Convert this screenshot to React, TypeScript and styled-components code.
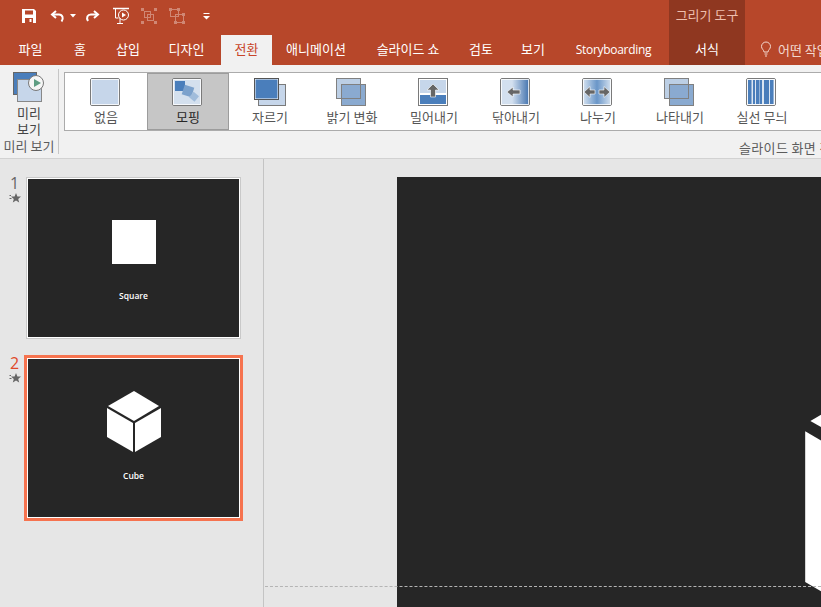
import styled, { createGlobalStyle } from "styled-components";

const GlobalStyle = createGlobalStyle`
    html, body {
        margin: 0;
        padding: 0;
        overflow: hidden;
        background-color: #e6e6e6;
    }
    * {
        box-sizing: border-box;
    }
    body {
        font-family: "Noto Sans CJK KR", "Noto Sans", sans-serif;
        font-size: 13px;
    }
`;

const Page = styled.div`
    width: 821px;
    height: 607px;
    overflow: hidden;
    display: flex;
    flex-direction: column;
`;

const TitleRow = styled.div`
    display: flex;
    justify-content: space-between;
    height: 35px;
    padding-right: 76px;
    background-color: #b7472a;
`;

const QuickAccess = styled.div`
    display: flex;
    align-items: center;
    padding: 0 0 3px 20px;
`;

const QuickButton = styled.div<{ $w: number; $gap: number; $dim?: boolean }>`
    width: ${(p) => p.$w}px;
    height: 20px;
    margin-left: ${(p) => p.$gap}px;
    display: flex;
    align-items: center;
    justify-content: center;
    opacity: ${(p) => (p.$dim ? 0.35 : 1)};
`;

const ContextLabel = styled.div`
    width: 76px;
    background-color: #8f3720;
    color: #eebfae;
    text-align: center;
    line-height: 30px;
    white-space: nowrap;
`;

const TabRow = styled.div`
    display: flex;
    height: 30px;
    padding-left: 5px;
    background-color: #b7472a;
`;

const Tab = styled.div<{ $w: number; $active?: boolean; $context?: boolean }>`
    width: ${(p) => p.$w}px;
    flex-shrink: 0;
    text-align: center;
    line-height: 28px;
    white-space: nowrap;
    color: ${(p) => (p.$active ? "#c8452a" : "#fff")};
    background-color: ${(p) => (p.$active ? "#f1f1f1" : p.$context ? "#8f3720" : "transparent")};
`;

const LatinText = styled.span`
    font-family: "Open Sans", sans-serif;
    font-size: 12px;
    letter-spacing: -0.3px;
    margin-left: -2px;
`;

const TellMe = styled.div`
    display: flex;
    align-items: center;
    gap: 6px;
    padding: 0 0 2px 15px;
    color: #f3d9d0;
    white-space: nowrap;
`;

const Ribbon = styled.div`
    display: flex;
    height: 94px;
    flex-shrink: 0;
    overflow: hidden;
    background-color: #f1f1f1;
    border-bottom: 1px solid #d2d2d2;
`;

const PreviewGroup = styled.div`
    width: 59px;
    height: 85px;
    margin-top: 4px;
    border-right: 1px solid #c6c6c6;
    display: flex;
    flex-direction: column;
    align-items: center;
    color: #444;
`;

const PreviewButton = styled.div`
    display: flex;
    flex-direction: column;
    align-items: center;
    height: 71px;
    padding-top: 3px;
    line-height: 16px;
    text-align: center;
`;

const PreviewText = styled.div`
    margin-top: 2px;
`;

const GroupLabel = styled.div`
    color: #5c5c5c;
    line-height: 16px;
    white-space: nowrap;
`;

const TransitionLabel = styled(GroupLabel)`
    margin-left: 675px;
    letter-spacing: 0.35px;
`;

const TransitionGroup = styled.div`
    padding: 7px 0 0 5px;
    width: 762px;
    flex-shrink: 0;
`;

const Gallery = styled.div`
    display: flex;
    width: 800px;
    height: 59px;
    margin-bottom: 9px;
    background-color: #fff;
    border: 1px solid #ababab;
`;

const GalleryItem = styled.div<{ $selected?: boolean }>`
    width: 82px;
    flex-shrink: 0;
    display: flex;
    flex-direction: column;
    align-items: center;
    padding-top: 5px;
    color: ${(p) => (p.$selected ? "#262626" : "#555")};
    background-color: ${(p) => (p.$selected ? "#c6c6c6" : "transparent")};
    outline: ${(p) => (p.$selected ? "1px solid #9c9c9c" : "none")};
    outline-offset: -1px;
`;

const GalleryText = styled.div`
    line-height: 16px;
    margin-top: 2px;
    white-space: nowrap;
`;

const Workspace = styled.div`
    position: relative;
    flex: 1;
    display: flex;
    overflow: hidden;
    background-color: #e6e6e6;
`;

const ThumbPane = styled.div`
    width: 264px;
    flex-shrink: 0;
    padding: 19px 0 0 10px;
    display: flex;
    flex-direction: column;
    gap: 20px;
    border-right: 1px solid #c4c4c4;
`;

const ThumbRow = styled.div`
    display: flex;
`;

const ThumbMeta = styled.div<{ $selected?: boolean }>`
    width: 17px;
    margin-left: -4px;
    margin-right: 4px;
    display: flex;
    flex-direction: column;
    align-items: center;
    font-family: "Open Sans", sans-serif;
    font-size: 16px;
    line-height: 10px;
    color: ${(p) => (p.$selected ? "#e0492a" : "#666")};
`;

const StarMark = styled.svg`
    margin-top: 5px;
    display: block;
`;

const Thumb = styled.div<{ $selected?: boolean }>`
    position: relative;
    width: 213px;
    height: 160px;
    display: flex;
    flex-direction: column;
    align-items: center;
    background-color: #262626;
    border: 1px solid #fff;
    outline: ${(p) => (p.$selected ? "3px solid #f6734f" : "1px solid #c9c9c9")};
`;

const ThumbShapeSlot = styled.div`
    height: 80px;
    margin-top: 32px;
    display: flex;
    justify-content: center;
`;

const WhiteSquare = styled.div`
    width: 44px;
    height: 44px;
    margin-top: 9px;
    background-color: #fff;
`;

const ThumbCaption = styled.div`
    font-family: "Open Sans", sans-serif;
    font-size: 8.5px;
    font-weight: 600;
    line-height: 10px;
    color: #fff;
`;

const Canvas = styled.div`
    flex: 1;
    padding: 18px 0 0 133px;
`;

const MainSlide = styled.div`
    position: relative;
    height: 440px;
    overflow: hidden;
    background-color: #262626;
`;

const MainCube = styled.div`
    position: absolute;
    left: 408px;
    top: 166px;
    width: 281px;
    height: 317px;
`;

const GuideLine = styled.div`
    position: absolute;
    left: 265px;
    right: 0;
    top: 427px;
    border-top: 1px dashed #b4b4b4;
`;

function Cube({ size }: { size?: number }) {
    return (
        <svg viewBox="0 0 54 61" width={size ?? "100%"} height={size ? (size * 61) / 54 : "100%"} fill="#fff" display="block">
            <polygon points="27,0 52,15 27,30 1,15" />
            <polygon points="0,17 26,32 26,61 0,46" />
            <polygon points="28,32 54,17 54,46 28,61" />
        </svg>
    );
}

function Star() {
    return (
        <StarMark width="12" height="10" viewBox="0 0 12 10" fill="#666">
            <polygon points="7,0 8.400,3.400 12,3.600 9.200,5.900 10.200,9.500 7,7.600 3.800,9.500 4.800,5.900 2,3.600 5.600,3.400" />
            <rect x="0.500" y="2" width="1.500" height="1" />
            <rect x="0.500" y="5" width="2" height="1" />
        </StarMark>
    );
}

function Frame({ fill = "#c6d6ea" }: { fill?: string }) {
    return (
        <>
            <rect x="1.500" y="0.500" width="29" height="27" rx="1.500" fill={fill} stroke="#7a7a7a" />
            <rect x="2.500" y="1.500" width="27" height="25" fill="none" stroke="#fff" strokeOpacity="0.8" />
        </>
    );
}

function TransitionIcon({ kind }: { kind: string }) {
    return (
        <svg width="34" height="29" viewBox="0 0 34 29">
            <defs>
                <linearGradient id="wipe" x1="0" x2="1" y1="0" y2="0">
                    <stop offset="0.4" stopColor="#d3e0ef" />
                    <stop offset="1" stopColor="#3f70ad" />
                </linearGradient>
                <linearGradient id="split" x1="0" x2="1" y1="0" y2="0">
                    <stop offset="0" stopColor="#d8e4f1" />
                    <stop offset="0.5" stopColor="#6a96c8" />
                    <stop offset="1" stopColor="#d8e4f1" />
                </linearGradient>
            </defs>
            {kind === "none" && <Frame />}
            {kind === "morph" && (
                <>
                    <Frame fill="#d4e0ee" />
                    <rect x="4" y="3" width="10" height="10" fill="#4a7ebb" />
                    <rect x="12" y="8" width="10" height="10" fill="#7ba1cc" transform="rotate(18 17 13)" />
                    <rect x="20" y="15" width="7" height="7" fill="#a0bcdb" transform="rotate(40 23 18)" />
                </>
            )}
            {kind === "cut" && (
                <>
                    <rect x="5.500" y="6.500" width="27" height="21" fill="#c6d6ea" stroke="#7a7a7a" />
                    <rect x="1.500" y="0.500" width="24" height="21" fill="#fff" stroke="#555" />
                    <rect x="2.500" y="1.500" width="22" height="19" fill="#4a7ebb" />
                </>
            )}
            {(kind === "fade" || kind === "appear") && (
                <>
                    <rect x="1.500" y="0.500" width="24" height="20" fill="#bccfe5" stroke="#808080" />
                    <rect x="6.500" y="6.500" width="24" height="21" fill="#8aaad0" stroke="#808080" />
                    <rect x="1.500" y="0.500" width="24" height="20" fill="none" stroke="#808080" />
                </>
            )}
            {kind === "push" && (
                <>
                    <rect x="1.500" y="0.500" width="29" height="27" fill="#fff" stroke="#7a7a7a" />
                    <rect x="3" y="2" width="26" height="13" fill="#c6d6ea" />
                    <rect x="3" y="17" width="26" height="9" fill="#4a7ebb" />
                    <polygon points="16,6 22,12 18.500,12 18.500,19 13.500,19 13.500,12 10,12" fill="#666" stroke="#fff" strokeWidth="0.600" />
                </>
            )}
            {kind === "wipe" && (
                <>
                    <Frame fill="url(#wipe)" />
                    <polygon points="8,14 14,9 14,12 21,12 21,16 14,16 14,19" fill="#666" stroke="#fff" strokeWidth="0.600" />
                </>
            )}
            {kind === "split" && (
                <>
                    <Frame fill="url(#split)" />
                    <polygon points="3,14 9,8.500 9,12 14,12 14,16 9,16 9,19.500" fill="#666" stroke="#fff" strokeWidth="0.600" />
                    <polygon points="29,14 23,8.500 23,12 18,12 18,16 23,16 23,19.500" fill="#666" stroke="#fff" strokeWidth="0.600" />
                </>
            )}
            {kind === "shape" && (
                <>
                    <Frame fill="#dbe6f2" />
                    {[3, 8, 11, 15, 19, 22, 25].map((x, i) => (
                        <rect key={x} x={x} y="2" width={i % 2 ? 2 : 3.500} height="24" fill="#4a7ebb" />
                    ))}
                </>
            )}
        </svg>
    );
}

const tabs = [
    { label: "파일", w: 51 },
    { label: "홈", w: 48 },
    { label: "삽입", w: 48 },
    { label: "디자인", w: 69 },
    { label: "전환", w: 51, active: true },
    { label: "애니메이션", w: 88 },
    { label: "슬라이드 쇼", w: 96 },
    { label: "검토", w: 50 },
    { label: "보기", w: 54 },
];

const transitions = [
    { kind: "none", label: "없음" },
    { kind: "morph", label: "모핑", selected: true },
    { kind: "cut", label: "자르기" },
    { kind: "fade", label: "밝기 변화" },
    { kind: "push", label: "밀어내기" },
    { kind: "wipe", label: "닦아내기" },
    { kind: "split", label: "나누기" },
    { kind: "appear", label: "나타내기" },
    { kind: "shape", label: "실선 무늬" },
];

export default function App() {
    return (
        <Page>
            <GlobalStyle />
            <TitleRow>
                <QuickAccess>
                    <QuickButton $w={18} $gap={0}>
                        <svg width="16" height="16" viewBox="0 0 16 16">
                            <path d="M1 1h12l2 2v12H1z" fill="#fff" />
                            <rect x="4" y="2.500" width="8" height="4" fill="#b7472a" />
                            <rect x="4" y="10" width="8" height="5" fill="#b7472a" />
                            <rect x="8.500" y="11" width="2" height="3" fill="#fff" />
                        </svg>
                    </QuickButton>
                    <QuickButton $w={18} $gap={11}>
                        <svg width="16" height="16" viewBox="0 0 16 16" fill="none" stroke="#fff" strokeWidth="2">
                            <path d="M6 3L2 6.500 6 10" />
                            <path d="M3 6.500h6c3.500 0 5 4 2.500 7" />
                        </svg>
                    </QuickButton>
                    <QuickButton $w={6} $gap={3}>
                        <svg width="6" height="4" viewBox="0 0 6 4"><polygon points="0,0 6,0 3,3.500" fill="#fff" /></svg>
                    </QuickButton>
                    <QuickButton $w={18} $gap={7}>
                        <svg width="16" height="16" viewBox="0 0 16 16" fill="none" stroke="#fff" strokeWidth="2">
                            <path d="M10 3l4 3.500L10 10" />
                            <path d="M13 6.500H7c-3.500 0-5 3-3 6.500" />
                        </svg>
                    </QuickButton>
                    <QuickButton $w={20} $gap={10}>
                        <svg width="18" height="18" viewBox="0 0 18 18" fill="none" stroke="#fff">
                            <path d="M1 1.500h16" strokeWidth="1.500" />
                            <path d="M3.500 2v9h3" />
                            <circle cx="11.500" cy="8" r="5" />
                            <polygon points="10,5.500 14,8 10,10.500" fill="#fff" stroke="none" />
                            <path d="M5 16.500h6M8 11v5" />
                        </svg>
                    </QuickButton>
                    <QuickButton $w={18} $gap={9} $dim>
                        <svg width="16" height="16" viewBox="0 0 16 16" fill="none" stroke="#fff">
                            <rect x="3.500" y="3.500" width="6" height="6" />
                            <rect x="6.500" y="6.500" width="6" height="6" />
                            <g fill="#fff" stroke="none">
                                <rect x="0" y="0" width="3" height="3" />
                                <rect x="13" y="0" width="3" height="3" />
                                <rect x="0" y="13" width="3" height="3" />
                                <rect x="13" y="13" width="3" height="3" />
                            </g>
                        </svg>
                    </QuickButton>
                    <QuickButton $w={18} $gap={10} $dim>
                        <svg width="16" height="16" viewBox="0 0 16 16" fill="none" stroke="#fff">
                            <rect x="1.500" y="1.500" width="8" height="7" />
                            <rect x="6.500" y="6.500" width="8" height="8" />
                            <g fill="#fff" stroke="none">
                                <rect x="0" y="0" width="3" height="3" />
                                <rect x="8" y="0" width="3" height="3" />
                                <rect x="5" y="13" width="3" height="3" />
                                <rect x="13" y="5" width="3" height="3" />
                                <rect x="13" y="13" width="3" height="3" />
                            </g>
                        </svg>
                    </QuickButton>
                    <QuickButton $w={8} $gap={16}>
                        <svg width="7" height="7" viewBox="0 0 7 7" fill="#fff">
                            <rect x="0.500" y="0" width="6" height="1" />
                            <polygon points="0,3 7,3 3.500,6.500" />
                        </svg>
                    </QuickButton>
                </QuickAccess>
                <ContextLabel>그리기 도구</ContextLabel>
            </TitleRow>
            <TabRow>
                {tabs.map((t) => (
                    <Tab key={t.label} $w={t.w} $active={t.active}>{t.label}</Tab>
                ))}
                <Tab $w={109}><LatinText>Storyboarding</LatinText></Tab>
                <Tab $w={76} $context>서식</Tab>
                <TellMe>
                    <svg width="12" height="16" viewBox="0 0 12 16" fill="none" stroke="#f3d9d0">
                        <path d="M4 11c0-2-2.500-3-2.500-5.500a4.500 4.500 0 0 1 9 0C10.500 8 8 9 8 11z" />
                        <path d="M4.500 13h3M5 15h2" />
                    </svg>
                    어떤 작업을 원하시나요?
                </TellMe>
            </TabRow>
            <Ribbon>
                <PreviewGroup>
                    <PreviewButton>
                        <svg width="34" height="31" viewBox="0 0 34 31" display="block">
                            <rect x="1.500" y="0.500" width="23" height="22" fill="#4a7ebb" stroke="#666" />
                            <rect x="5.500" y="7.500" width="24" height="22" fill="#c6d6ea" stroke="#888" />
                            <circle cx="24" cy="11" r="7.500" fill="#f6f6f6" stroke="#777" />
                            <polygon points="22,7 29,11 22,15" fill="#5f9e83" />
                        </svg>
                        <PreviewText>미리<br />보기</PreviewText>
                    </PreviewButton>
                    <GroupLabel>미리 보기</GroupLabel>
                </PreviewGroup>
                <TransitionGroup>
                    <Gallery>
                        {transitions.map((t) => (
                            <GalleryItem key={t.kind} $selected={t.selected}>
                                <TransitionIcon kind={t.kind} />
                                <GalleryText>{t.label}</GalleryText>
                            </GalleryItem>
                        ))}
                    </Gallery>
                    <TransitionLabel>슬라이드 화면 전환</TransitionLabel>
                </TransitionGroup>
            </Ribbon>
            <Workspace>
                <ThumbPane>
                    <ThumbRow>
                        <ThumbMeta>
                            1
                            <Star />
                        </ThumbMeta>
                        <Thumb>
                            <ThumbShapeSlot><WhiteSquare /></ThumbShapeSlot>
                            <ThumbCaption>Square</ThumbCaption>
                        </Thumb>
                    </ThumbRow>
                    <ThumbRow>
                        <ThumbMeta $selected>
                            2
                            <Star />
                        </ThumbMeta>
                        <Thumb $selected>
                            <ThumbShapeSlot><Cube size={54} /></ThumbShapeSlot>
                            <ThumbCaption>Cube</ThumbCaption>
                        </Thumb>
                    </ThumbRow>
                </ThumbPane>
                <Canvas>
                    <MainSlide>
                        <MainCube><Cube /></MainCube>
                    </MainSlide>
                </Canvas>
                <GuideLine />
            </Workspace>
        </Page>
    );
}
